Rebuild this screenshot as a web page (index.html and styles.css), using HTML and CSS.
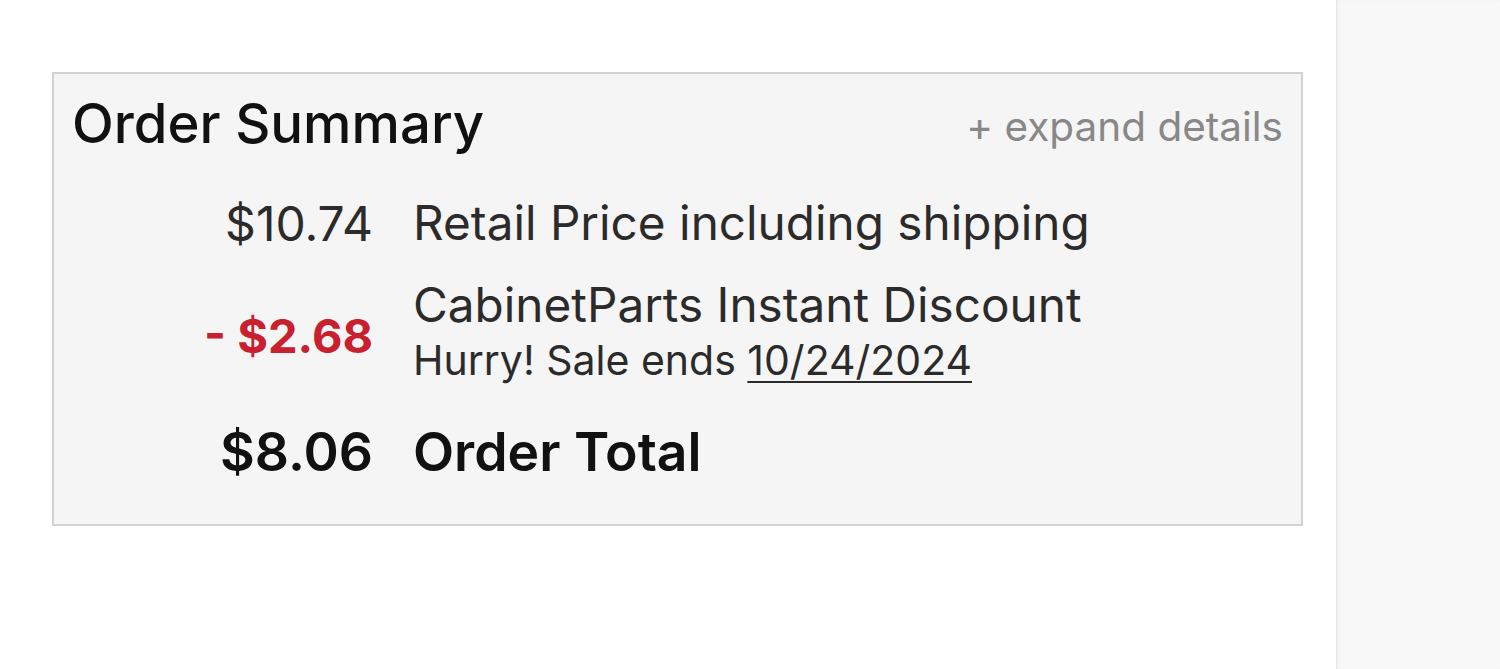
FILE: index.html
```html
<!DOCTYPE html>
<html lang="en">
<head>
    <meta charset="UTF-8">
    <meta name="viewport" content="width=device-width, initial-scale=1.0">
    <title>Order Summary</title>
    <link rel="stylesheet" href="styles.css">
</head>
<body>
    <div class="page">
        <div class="main">
            <div class="summary-box">
                <div class="summary-head">
                    <h2>Order Summary</h2>
                    <a class="expand-link" href="#">+ expand details</a>
                </div>
                <div class="summary-rows">
                    <div class="price">$10.74</div>
                    <div class="label">Retail Price including shipping</div>

                    <div class="price discount">- $2.68</div>
                    <div class="label">
                        CabinetParts Instant Discount
                        <div class="sale-note">Hurry! Sale ends <span class="sale-date">10/24/2024</span></div>
                    </div>

                    <div class="price total">$8.06</div>
                    <div class="label total">Order Total</div>
                </div>
            </div>
        </div>
        <div class="sidebar"></div>
    </div>
</body>
</html>
```

FILE: styles.css
```css
body {
    margin: 0;
    padding: 0;
    height: 100vh;
    overflow: hidden;
    font-family: Inter, "Noto Sans", sans-serif;
    color: #222;
    background: #fff;
}
.page {
    display: flex;
    height: 100%;
}
.main {
    flex: 1;
    padding: 72px 33px 0 52px;
    box-sizing: border-box;
}
.sidebar {
    width: 163px;
    background: #f8f8f8;
    border-left: 1px solid #e6e6e6;
    box-shadow: inset 2px 0 3px rgba(0, 0, 0, 0.03);
}
.summary-box {
    background: #f5f5f5;
    border: 2px solid #d2d2d2;
    padding: 22px 18px 0 18px;
    box-sizing: border-box;
    height: 454px;
}
.summary-head {
    display: flex;
    justify-content: space-between;
    align-items: flex-start;
}
h2 {
    margin: 0;
    padding: 0;
    font-size: 54.5px;
    line-height: 1;
    font-weight: 500;
    color: #111;
}
.expand-link {
    font-size: 40.5px;
    line-height: 49px;
    margin-top: 6px;
    color: #888;
    text-decoration: none;
}
.summary-rows {
    display: grid;
    grid-template-columns: 301px 1fr;
    column-gap: 40px;
    row-gap: 24px;
    align-items: center;
    margin-top: 44px;
}
.price {
    text-align: right;
    font-size: 48px;
    line-height: 1.2;
    color: #2b2b2b;
}
.label {
    font-size: 47.7px;
    line-height: 1.2;
    color: #2b2b2b;
}
.price.discount {
    font-size: 47px;
    color: #c9202f;
    font-weight: 700;
    padding-top: 10px;
}
.sale-note {
    font-size: 41px;
    line-height: 1.2;
    margin-top: 2px;
}
.sale-date {
    text-decoration: underline;
    text-decoration-thickness: 2px;
    text-underline-offset: 6px;
}
.price.total,
.label.total {
    font-size: 53.5px;
    font-weight: 600;
    color: #111;
    margin-top: 11px;
}
```
